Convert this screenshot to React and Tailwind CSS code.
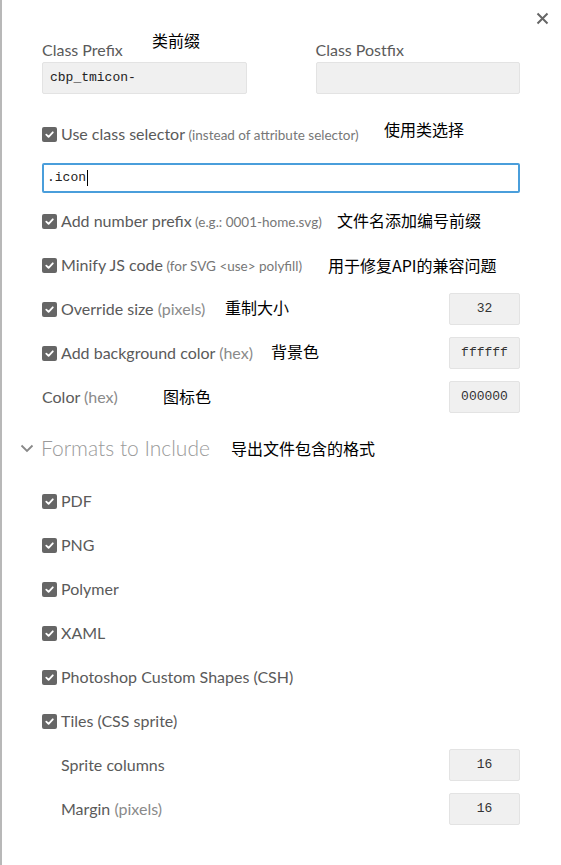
import React from "react";

const ui = { fontFamily: "Lato, 'Open Sans', sans-serif" };
const mono = { fontFamily: "'Liberation Mono', 'DejaVu Sans Mono', monospace" };
const cjk = { fontFamily: "'Noto Sans CJK SC', sans-serif" };

function Check() {
  return (
    <span className="flex h-[15px] w-[15px] shrink-0 items-center justify-center rounded-[2px] bg-[#666666]">
      <svg width="11" height="11" viewBox="0 0 12 12" fill="none">
        <path d="M2.5 6.2 L5 8.6 L9.6 3.6" stroke="#ffffff" strokeWidth="2" strokeLinecap="round" strokeLinejoin="round" />
      </svg>
    </span>
  );
}

function Note({ children, className }) {
  return (
    <span className={"absolute text-[16px] leading-none text-black " + className} style={cjk}>
      {children}
    </span>
  );
}

function CheckRow({ label, hint, hintSize = "small", note, noteClass, right }) {
  return (
    <div className="relative flex h-[44px] items-center">
      <Check />
      <span className="ml-[4px] text-[16px] text-[#5a5a5a]">
        {label}
        {hint && (
          <span className={hintSize === "small" ? "text-[13.5px] text-[#777777]" : "text-[16px] text-[#8a8a8a]"}>
            {" "}
            {hint}
          </span>
        )}
      </span>
      {note && <Note className={noteClass}>{note}</Note>}
      {right && <div className="ml-auto">{right}</div>}
    </div>
  );
}

function SmallInput({ value }) {
  return (
    <div
      className="flex h-[32px] w-[71px] items-center justify-center rounded-[2px] border border-[#e3e3e3] bg-[#f0f0f0] text-[13px] text-[#333333]"
      style={mono}
    >
      {value}
    </div>
  );
}

export default function App() {
  return (
    <div className="relative h-[865px] w-[561px] overflow-hidden border-l-2 border-[#b8b8b8] bg-white" style={ui}>
      <svg className="absolute left-[534px] top-[12px]" width="13" height="13" viewBox="0 0 13 13">
        <path d="M1.5 1.5 L11.5 11.5 M11.5 1.5 L1.5 11.5" stroke="#666666" strokeWidth="2" />
      </svg>

      <div className="pl-[40px] pr-[41px] pt-[40px]">
        <div className="grid grid-cols-2 gap-x-[69px]">
          <div className="relative">
            <div className="h-[20px] text-[16px] leading-[20px] text-[#5a5a5a]">Class Prefix</div>
            <Note className="left-[110px] top-[-8px]">类前缀</Note>
            <div
              className="mt-[2px] flex h-[32px] items-center rounded-[2px] border border-[#e3e3e3] bg-[#f0f0f0] pl-[7px] text-[13px] text-[#222222]"
              style={mono}
            >
              cbp_tmicon-
            </div>
          </div>
          <div>
            <div className="h-[20px] text-[16px] leading-[20px] text-[#5a5a5a]">Class Postfix</div>
            <div className="mt-[2px] h-[32px] rounded-[2px] border border-[#e3e3e3] bg-[#f0f0f0]" />
          </div>
        </div>

        <div className="mt-[18px]">
          <CheckRow
            label="Use class selector"
            hint="(instead of attribute selector)"
            note="使用类选择"
            noteClass="left-[342px] top-[9px]"
          />
        </div>
        <div
          className="mt-[7px] flex h-[30px] items-center rounded-[2px] border-2 border-[#4a9edb] pl-[3px] text-[13px] text-[#222222]"
          style={mono}
        >
          .icon<span className="ml-[1px] inline-block h-[16px] w-[1px] bg-black" />
        </div>

        <div className="mt-[6px]">
          <CheckRow
            label="Add number prefix"
            hint="(e.g.: 0001-home.svg)"
            note="文件名添加编号前缀"
            noteClass="left-[295px] top-[13px]"
          />
          <CheckRow
            label="Minify JS code"
            hint="(for SVG <use> polyfill)"
            note="用于修复API的兼容问题"
            noteClass="left-[286px] top-[14px]"
          />
          <CheckRow
            label="Override size"
            hint="(pixels)"
            hintSize="big"
            note="重制大小"
            noteClass="left-[183px] top-[12px]"
            right={<SmallInput value="32" />}
          />
          <CheckRow
            label="Add background color"
            hint="(hex)"
            hintSize="big"
            note="背景色"
            noteClass="left-[229px] top-[12px]"
            right={<SmallInput value="ffffff" />}
          />
          <div className="relative flex h-[44px] items-center">
            <span className="text-[16px] text-[#5a5a5a]">
              Color <span className="text-[#8a8a8a]">(hex)</span>
            </span>
            <Note className="left-[121px] top-[13px]">图标色</Note>
            <div className="ml-auto">
              <SmallInput value="000000" />
            </div>
          </div>
        </div>
      </div>

      <div className="relative mt-[7px] flex h-[44px] items-center pl-[18px]">
        <svg width="14" height="9" viewBox="0 0 14 9" fill="none">
          <path d="M1.5 1.5 L7 7 L12.5 1.5" stroke="#888888" strokeWidth="1.8" />
        </svg>
        <span className="ml-[7px] text-[21px] font-light text-[#9a9a9a]">Formats to Include</span>
        <Note className="left-[229px] top-[14px]">导出文件包含的格式</Note>
      </div>

      <div className="mt-[9px] pl-[40px] pr-[41px]">
        <CheckRow label="PDF" />
        <CheckRow label="PNG" />
        <CheckRow label="Polymer" />
        <CheckRow label="XAML" />
        <CheckRow label="Photoshop Custom Shapes (CSH)" />
        <CheckRow label="Tiles (CSS sprite)" />
        <div className="flex h-[44px] items-center pl-[19px]">
          <span className="text-[16px] text-[#5a5a5a]">Sprite columns</span>
          <div className="ml-auto">
            <SmallInput value="16" />
          </div>
        </div>
        <div className="flex h-[44px] items-center pl-[19px]">
          <span className="text-[16px] text-[#5a5a5a]">
            Margin <span className="text-[#8a8a8a]">(pixels)</span>
          </span>
          <div className="ml-auto">
            <SmallInput value="16" />
          </div>
        </div>
      </div>
    </div>
  );
}
